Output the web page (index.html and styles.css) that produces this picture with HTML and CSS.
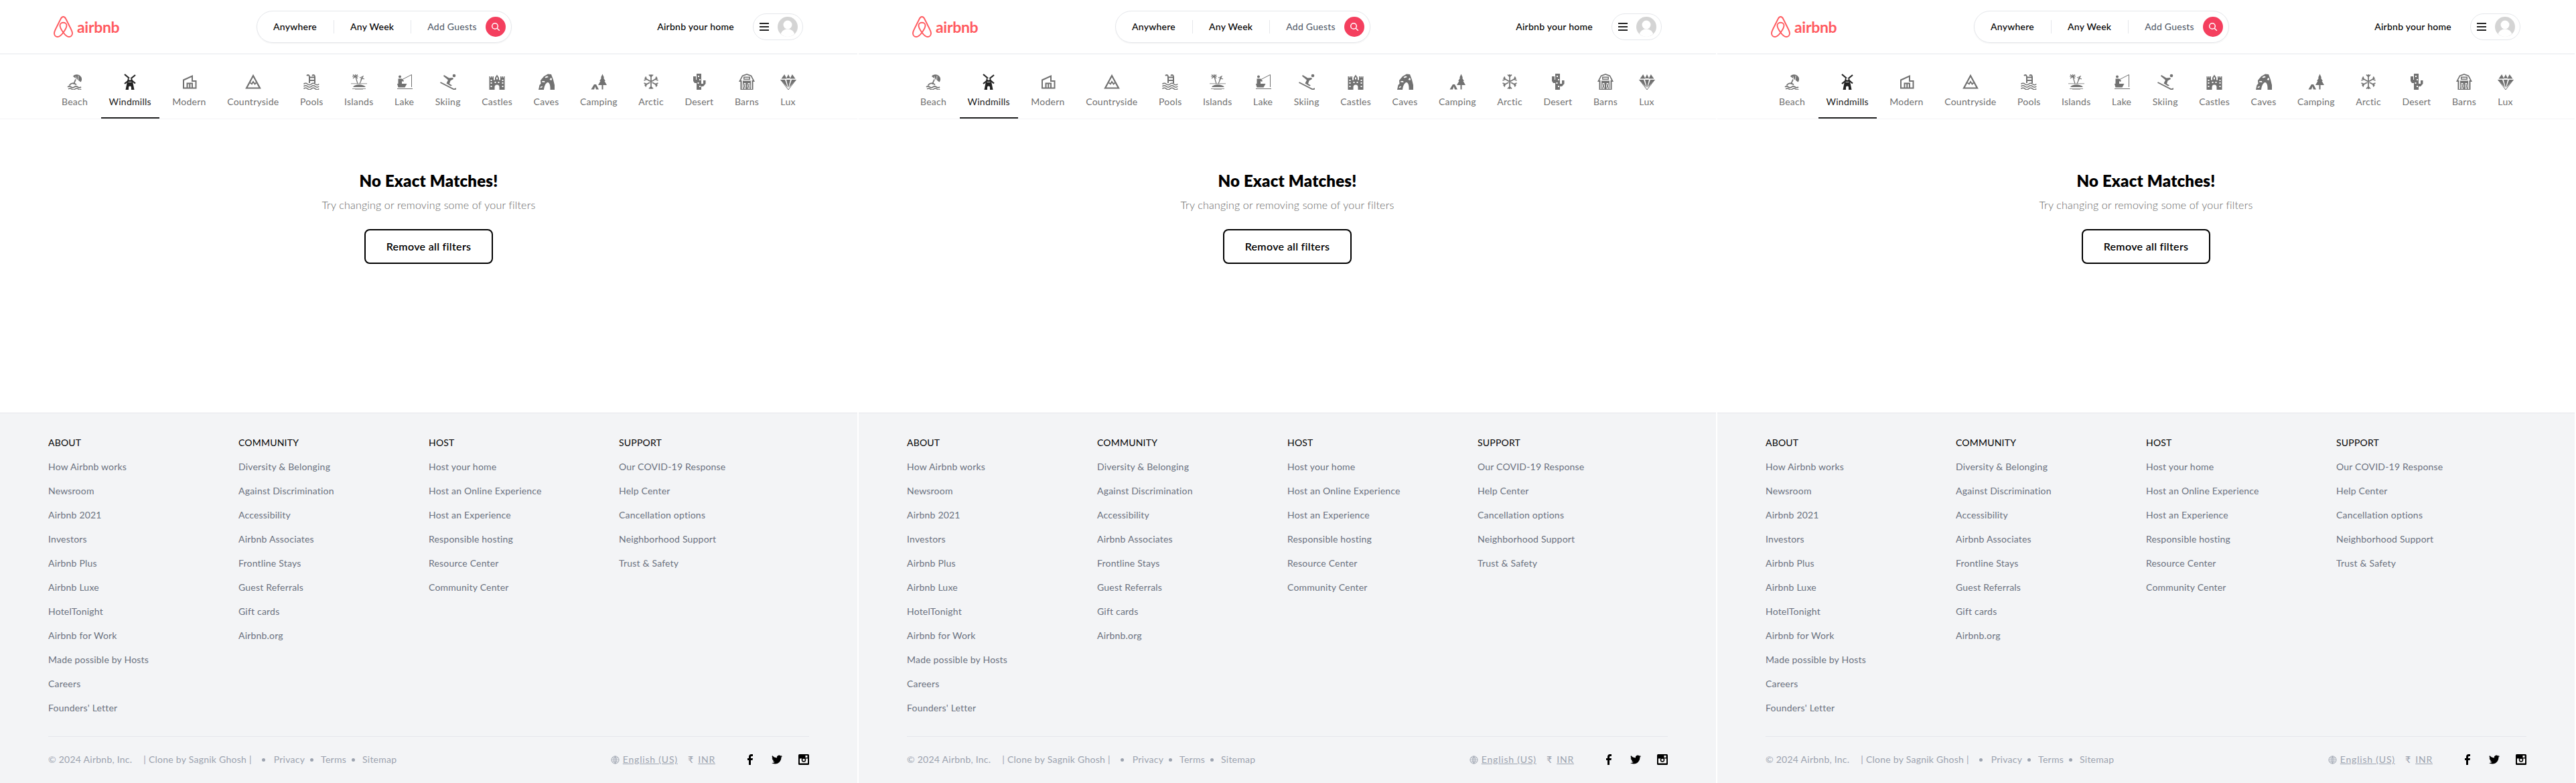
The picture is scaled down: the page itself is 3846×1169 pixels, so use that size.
FILE: index.html
```html
<!DOCTYPE html>
<html lang="en">
<head>
<meta charset="utf-8">
<title>Airbnb</title>
<link rel="stylesheet" href="styles.css">
</head>
<body>
<svg class="defs" xmlns="http://www.w3.org/2000/svg">
<symbol id="i-logo" viewBox="0 0 29 32"><path fill="none" stroke="currentColor" stroke-width="1.9" d="M14.5 24.5C17 28 20 31 23 31c3 0 5-2.5 5-5.2 0-1.8-1-4.3-2.5-7.3l-7-14C17.5 2.3 16 1 14.5 1s-3 1.300-4 3.500l-7 14C2 21.500 1 24 1 25.800 1 28.500 3 31 6 31c3 0 6-3 8.500-6.500 3-4 5-8 5-10.500s-2.200-4.200-5-4.200-5 1.700-5 4.200 2 6.500 5 10.500z"/></symbol>
<symbol id="i-beach" viewBox="0 0 24 24"><path d="M9 4C11 0 19 0 21.500 5.500 22.800 8.500 21.800 11 20.500 12.500z"/><path d="M13 4 14.500 9.500M17 3 16.500 10" stroke="#fff" stroke-width=".8" fill="none"/><path d="M13 8.500 10 15.500" fill="none" stroke="currentColor" stroke-width="1.800"/><path d="M3.500 17.500C6 14 10 13 14 16.500M1 19.800q2.500-2 5 0t5 0 5 0 5 0" fill="none" stroke="currentColor" stroke-width="1.700"/><path d="M2 23q2.500-2 5 0t5 0 5 0 4 0" fill="none" stroke="currentColor" stroke-width="1.500"/></symbol>
<symbol id="i-windmill" viewBox="0 0 24 24"><path d="M4 1 20 14.500M20 2 4 15" stroke="currentColor" stroke-width="2.200" fill="none"/><path d="M9 6.500h6L18.500 24h-4.500v-3.500a2 2 0 0 0-4 0V24H5.500z"/><circle cx="12" cy="8" r="1.800" fill="#fff"/><path d="M9.500 12.500H14.500" stroke="#fff" stroke-width=".8"/></symbol>
<symbol id="i-modern" viewBox="0 0 24 24"><path d="M3 21.500V9.500L16 3.500V11H21.500V21.500ZM8.500 21.500V14.500H16V21.500M12.300 14.500V21.500" fill="none" stroke="currentColor" stroke-width="2"/></symbol>
<symbol id="i-mountain" viewBox="0 0 24 24"><path d="M2 21.500 12 3l10 18.500z" fill="none" stroke="currentColor" stroke-width="2.200"/><path d="M7.500 13.500 10 15.500l2-3.500 2.500 3.500 2-2" fill="none" stroke="currentColor" stroke-width="1.800"/></symbol>
<symbol id="i-pool" viewBox="0 0 24 24"><path d="M5 3C7 1 9 2 9 5V14M13 3c2-2 4-1 4 2V14M9 5.500H17M9 10H17" fill="none" stroke="currentColor" stroke-width="2"/><path d="M0.500 15.500q2.800-2.500 5.700 0t5.700 0 5.700 0 5.700 0M0.500 19q2.800-2.500 5.700 0t5.700 0 5.700 0 5.700 0M0.500 22.500q2.800-2.500 5.700 0t5.700 0 5.700 0 5.700 0" fill="none" stroke="currentColor" stroke-width="1.600"/></symbol>
<symbol id="i-island" viewBox="0 0 24 24"><path d="M6.500 1 7.500 5M2 4h9M3 1.500 10 7M10 1.500 3 7M7 5 10 15M16 4l1 4M13 5.500 20 8M18.500 3 14.500 10M16.500 7 13 15" fill="none" stroke="currentColor" stroke-width="1.200"/><path d="M0 14.500h24v.8H0zM3 20c3-5 15-5 19 0z"/><path d="M2 22h20v.8H2zM6 23.500h12v.5H6z"/></symbol>
<symbol id="i-lake" viewBox="0 0 24 24"><circle cx="5" cy="4.500" r="2"/><path d="M2.500 7.500H8L11 10.500 10 12 8 11V16H2.500z"/><path d="M1 15H15.500L12.500 20.500H2.500z"/><path d="M8 9 22.500 1.500V20" fill="none" stroke="currentColor" stroke-width="1"/><path d="M1 22.500h23" stroke="currentColor" stroke-width="1"/></symbol>
<symbol id="i-ski" viewBox="0 0 24 24"><circle cx="21" cy="3" r="2.300"/><path d="M6 2 13.500 6.500 19 6 20 8 15.500 10.500 14 15 18 17.500 16 18.500 9.500 14.500 12 9.500 5 3.500z"/><path d="M0.500 13 21 23.500 25 22" fill="none" stroke="currentColor" stroke-width="1.900"/></symbol>
<symbol id="i-castle" viewBox="0 0 24 24"><path fill-rule="evenodd" d="M0.500 4H2V5.800H3V4H4.500V5.800H5.500V4H7V9.500H9V6L12 1.500 15 6V9.500H17V4H18.500V5.800H19.500V4H21V5.800H22V4H23.500V24H15.500V20A3.500 3.500 0 0 0 8.500 20V24H0.500ZM11 5.500V8.500H13V5.500ZM2.500 9V11H4.500V9ZM19.500 9V11H21.500V9ZM2.500 13V15H4.500V13ZM19.500 13V15H21.500V13ZM2.500 18V20H4.500V18ZM19.500 18V20H21.500V18ZM8.500 12V14H10.500V12ZM13.500 12V14H15.500V12Z"/></symbol>
<symbol id="i-cave" viewBox="0 0 24 24"><path fill-rule="evenodd" d="M0 24 1.500 17 3.500 15 3 10 8 4 14 0.500 19 1 22 9 24 17 24 24H17.500C18 17 16 12.500 13.500 13 10.500 14 8.500 19 8 24ZM13 3.500 9.500 5 10.500 6.500 15 5ZM18.500 6 16.500 9 19.500 10 20 7.500ZM5.500 11 5 12.500 9.500 13 9 11ZM2.500 20 3 21.500 6 20 5.500 18.500Z"/></symbol>
<symbol id="i-camp" viewBox="0 0 24 24"><path d="M17.500 0.500 20 6H19L21.800 11H20.500L24 17H18.500V23.500H16.500V17H11L14.500 11H13.200L16 6H15z"/><path d="M5 16H8L12 23.500H8L6.500 19 5 23.500H0.500z"/></symbol>
<symbol id="i-snow" viewBox="0 0 24 24"><path d="M12 1V23M2.500 6.500 21.500 17.500M21.500 6.500 2.500 17.500M9 1.500 12 4.500 15 1.500M9 22.500 12 19.500 15 22.500M1.500 10 5 8.500 4 4.500M22.500 10 19 8.500 20 4.500M1.500 14 5 15.500 4 19.500M22.500 14 19 15.500 20 19.500" fill="none" stroke="currentColor" stroke-width="1.700"/></symbol>
<symbol id="i-cactus" viewBox="0 0 24 24"><path fill-rule="evenodd" d="M8 0H15V24H8V14H5L3 11V4H7V9H8ZM15 15H18V10H21.500V15L18 19H15ZM10 3V5H12V3ZM12 8V10H14V8ZM9.500 13V15H11.500V13ZM12 18V20H14V18Z"/></symbol>
<symbol id="i-barn" viewBox="0 0 24 24"><path fill-rule="evenodd" d="M12 0 19 2.500 24 12H21.500V24H2.500V12H0L5 2.500ZM12 1.800 6 4 3 10H4.500V23H19.500V10H21L18 4Z"/><path fill-rule="evenodd" d="M7 4.500H17V9H7ZM8.500 6V7.500H15.500V6ZM6 10.500H18V24H6ZM7 14V22.500H11V14ZM13 14V22.500H17V14Z"/><path d="M7.500 14.500 10.500 22M10.500 14.500 7.500 22M13.500 14.500 16.500 22M16.500 14.500 13.500 22" stroke="currentColor" fill="none"/></symbol>
<symbol id="i-lux" viewBox="0 0 24 24"><path d="M6.200 1 9.500 7.500H1.500zM17.800 1 22.500 7.500H14.500zM12 1 15 7H9zM0 9H7L11 20.500zM24 9H17L13 20.500zM9 9H15L12 21z"/><path d="M12 24 0.500 9M12 24 23.500 9" stroke="currentColor" fill="none"/></symbol>
<symbol id="i-search" viewBox="0 0 14 14"><circle cx="6" cy="6" r="4.300" fill="none" stroke="currentColor" stroke-width="1.500"/><path d="M9.200 9.200 12.800 12.800" stroke="currentColor" stroke-width="1.500"/></symbol>
<symbol id="i-user" viewBox="0 0 30 30"><circle cx="15" cy="15" r="15" fill="#d4d4d4"/><circle cx="15" cy="12" r="6.500" fill="#fff"/><path d="M4.800 25.500C7 20 11 18.500 15 18.500s8 1.500 10.200 7A15 15 0 0 1 15 30 15 15 0 0 1 4.800 25.500z" fill="#fff"/></symbol>
<symbol id="i-globe" viewBox="0 0 14 14"><circle cx="7" cy="7" r="6" fill="none" stroke="currentColor"/><path d="M1 7H13M2 4H12M2 10H12M7 1V13M7 1C4 4 4 10 7 13M7 1C10 4 10 10 7 13" fill="none" stroke="currentColor" stroke-width=".8"/></symbol>
<symbol id="i-fb" viewBox="0 0 16 16"><path d="M6 16V9H4V6H6V4C6 1.500 7.500 0 9.500 0H12V3H10.500C9.500 3 9 3.500 9 4.500V6H12L11.500 9H9V16z"/></symbol>
<symbol id="i-tw" viewBox="0 0 24 24"><path d="M23.953 4.570a10 10 0 01-2.825.775 4.958 4.958 0 002.163-2.723c-.951.555-2.005.959-3.127 1.184a4.920 4.920 0 00-8.384 4.482C7.690 8.095 4.067 6.130 1.640 3.162a4.822 4.822 0 00-.666 2.475c0 1.710.870 3.213 2.188 4.096a4.904 4.904 0 01-2.228-.616v.060a4.923 4.923 0 003.946 4.827 4.996 4.996 0 01-2.212.085 4.936 4.936 0 004.604 3.417 9.867 9.867 0 01-6.102 2.105c-.390 0-.779-.023-1.170-.067a13.995 13.995 0 007.557 2.209c9.053 0 13.998-7.496 13.998-13.985 0-.210 0-.420-.015-.630A9.935 9.935 0 0024 4.590z"/></symbol>
<symbol id="i-ig" viewBox="0 0 16 16"><rect width="16" height="16" rx="1.500"/><path d="M2 6.500H14V13.500H2z" fill="#fff"/><circle cx="8" cy="8.500" r="3.300" fill="#000"/><circle cx="8" cy="8.500" r="1.700" fill="#fff"/><rect x="10.500" y="2" width="3" height="3" fill="#fff"/></symbol>
</svg>

<div class="panels">
<section class="panel">
<header class="top">
<a class="logo"><svg class="belo"><use href="#i-logo"/></svg><span class="wordmark">airbnb</span></a>
<div class="search"><span class="search-item">Anywhere</span><span class="search-item">Any Week</span><span class="search-guests">Add Guests</span><span class="search-btn"><svg class="search-ico"><use href="#i-search"/></svg></span></div>
<div class="account"><span class="host">Airbnb your home</span><div class="menu"><span class="burger"><i></i><i></i><i></i></span><svg class="avatar"><use href="#i-user"/></svg></div></div>
</header>
<nav class="cats">
<a class="cat"><svg class="cat-ico"><use href="#i-beach"/></svg>Beach</a>
<a class="cat active"><svg class="cat-ico"><use href="#i-windmill"/></svg>Windmills</a>
<a class="cat"><svg class="cat-ico"><use href="#i-modern"/></svg>Modern</a>
<a class="cat"><svg class="cat-ico"><use href="#i-mountain"/></svg>Countryside</a>
<a class="cat"><svg class="cat-ico"><use href="#i-pool"/></svg>Pools</a>
<a class="cat"><svg class="cat-ico"><use href="#i-island"/></svg>Islands</a>
<a class="cat"><svg class="cat-ico"><use href="#i-lake"/></svg>Lake</a>
<a class="cat"><svg class="cat-ico"><use href="#i-ski"/></svg>Skiing</a>
<a class="cat"><svg class="cat-ico"><use href="#i-castle"/></svg>Castles</a>
<a class="cat"><svg class="cat-ico"><use href="#i-cave"/></svg>Caves</a>
<a class="cat"><svg class="cat-ico"><use href="#i-camp"/></svg>Camping</a>
<a class="cat"><svg class="cat-ico"><use href="#i-snow"/></svg>Arctic</a>
<a class="cat"><svg class="cat-ico"><use href="#i-cactus"/></svg>Desert</a>
<a class="cat"><svg class="cat-ico"><use href="#i-barn"/></svg>Barns</a>
<a class="cat"><svg class="cat-ico"><use href="#i-lux"/></svg>Lux</a>
</nav>
<main class="empty"><h1>No Exact Matches!</h1><p>Try changing or removing some of your filters</p><button class="clear">Remove all filters</button></main>
<footer class="foot">
<div class="foot-cols">
<div class="foot-col"><h2>ABOUT</h2><a>How Airbnb works</a><a>Newsroom</a><a>Airbnb 2021</a><a>Investors</a><a>Airbnb Plus</a><a>Airbnb Luxe</a><a>HotelTonight</a><a>Airbnb for Work</a><a>Made possible by Hosts</a><a>Careers</a><a>Founders' Letter</a></div>
<div class="foot-col"><h2>COMMUNITY</h2><a>Diversity &amp; Belonging</a><a>Against Discrimination</a><a>Accessibility</a><a>Airbnb Associates</a><a>Frontline Stays</a><a>Guest Referrals</a><a>Gift cards</a><a>Airbnb.org</a></div>
<div class="foot-col"><h2>HOST</h2><a>Host your home</a><a>Host an Online Experience</a><a>Host an Experience</a><a>Responsible hosting</a><a>Resource Center</a><a>Community Center</a></div>
<div class="foot-col"><h2>SUPPORT</h2><a>Our COVID-19 Response</a><a>Help Center</a><a>Cancellation options</a><a>Neighborhood Support</a><a>Trust &amp; Safety</a></div>
</div>
<div class="legal">
<span>© 2024 Airbnb, Inc.</span><span class="clone">| Clone by Sagnik Ghosh |</span><span class="dot"></span><a>Privacy</a><span class="dot"></span><a>Terms</a><span class="dot"></span><a>Sitemap</a>
<div class="legal-right"><svg class="globe"><use href="#i-globe"/></svg><a class="u">English (US)</a><span class="rupee">₹</span><a class="u">INR</a><span class="socials"><svg class="soc"><use href="#i-fb"/></svg><svg class="soc"><use href="#i-tw"/></svg><svg class="soc"><use href="#i-ig"/></svg></span></div>
</div>
</footer>
</section>

<section class="panel">
<header class="top">
<a class="logo"><svg class="belo"><use href="#i-logo"/></svg><span class="wordmark">airbnb</span></a>
<div class="search"><span class="search-item">Anywhere</span><span class="search-item">Any Week</span><span class="search-guests">Add Guests</span><span class="search-btn"><svg class="search-ico"><use href="#i-search"/></svg></span></div>
<div class="account"><span class="host">Airbnb your home</span><div class="menu"><span class="burger"><i></i><i></i><i></i></span><svg class="avatar"><use href="#i-user"/></svg></div></div>
</header>
<nav class="cats">
<a class="cat"><svg class="cat-ico"><use href="#i-beach"/></svg>Beach</a>
<a class="cat active"><svg class="cat-ico"><use href="#i-windmill"/></svg>Windmills</a>
<a class="cat"><svg class="cat-ico"><use href="#i-modern"/></svg>Modern</a>
<a class="cat"><svg class="cat-ico"><use href="#i-mountain"/></svg>Countryside</a>
<a class="cat"><svg class="cat-ico"><use href="#i-pool"/></svg>Pools</a>
<a class="cat"><svg class="cat-ico"><use href="#i-island"/></svg>Islands</a>
<a class="cat"><svg class="cat-ico"><use href="#i-lake"/></svg>Lake</a>
<a class="cat"><svg class="cat-ico"><use href="#i-ski"/></svg>Skiing</a>
<a class="cat"><svg class="cat-ico"><use href="#i-castle"/></svg>Castles</a>
<a class="cat"><svg class="cat-ico"><use href="#i-cave"/></svg>Caves</a>
<a class="cat"><svg class="cat-ico"><use href="#i-camp"/></svg>Camping</a>
<a class="cat"><svg class="cat-ico"><use href="#i-snow"/></svg>Arctic</a>
<a class="cat"><svg class="cat-ico"><use href="#i-cactus"/></svg>Desert</a>
<a class="cat"><svg class="cat-ico"><use href="#i-barn"/></svg>Barns</a>
<a class="cat"><svg class="cat-ico"><use href="#i-lux"/></svg>Lux</a>
</nav>
<main class="empty"><h1>No Exact Matches!</h1><p>Try changing or removing some of your filters</p><button class="clear">Remove all filters</button></main>
<footer class="foot">
<div class="foot-cols">
<div class="foot-col"><h2>ABOUT</h2><a>How Airbnb works</a><a>Newsroom</a><a>Airbnb 2021</a><a>Investors</a><a>Airbnb Plus</a><a>Airbnb Luxe</a><a>HotelTonight</a><a>Airbnb for Work</a><a>Made possible by Hosts</a><a>Careers</a><a>Founders' Letter</a></div>
<div class="foot-col"><h2>COMMUNITY</h2><a>Diversity &amp; Belonging</a><a>Against Discrimination</a><a>Accessibility</a><a>Airbnb Associates</a><a>Frontline Stays</a><a>Guest Referrals</a><a>Gift cards</a><a>Airbnb.org</a></div>
<div class="foot-col"><h2>HOST</h2><a>Host your home</a><a>Host an Online Experience</a><a>Host an Experience</a><a>Responsible hosting</a><a>Resource Center</a><a>Community Center</a></div>
<div class="foot-col"><h2>SUPPORT</h2><a>Our COVID-19 Response</a><a>Help Center</a><a>Cancellation options</a><a>Neighborhood Support</a><a>Trust &amp; Safety</a></div>
</div>
<div class="legal">
<span>© 2024 Airbnb, Inc.</span><span class="clone">| Clone by Sagnik Ghosh |</span><span class="dot"></span><a>Privacy</a><span class="dot"></span><a>Terms</a><span class="dot"></span><a>Sitemap</a>
<div class="legal-right"><svg class="globe"><use href="#i-globe"/></svg><a class="u">English (US)</a><span class="rupee">₹</span><a class="u">INR</a><span class="socials"><svg class="soc"><use href="#i-fb"/></svg><svg class="soc"><use href="#i-tw"/></svg><svg class="soc"><use href="#i-ig"/></svg></span></div>
</div>
</footer>
</section>

<section class="panel">
<header class="top">
<a class="logo"><svg class="belo"><use href="#i-logo"/></svg><span class="wordmark">airbnb</span></a>
<div class="search"><span class="search-item">Anywhere</span><span class="search-item">Any Week</span><span class="search-guests">Add Guests</span><span class="search-btn"><svg class="search-ico"><use href="#i-search"/></svg></span></div>
<div class="account"><span class="host">Airbnb your home</span><div class="menu"><span class="burger"><i></i><i></i><i></i></span><svg class="avatar"><use href="#i-user"/></svg></div></div>
</header>
<nav class="cats">
<a class="cat"><svg class="cat-ico"><use href="#i-beach"/></svg>Beach</a>
<a class="cat active"><svg class="cat-ico"><use href="#i-windmill"/></svg>Windmills</a>
<a class="cat"><svg class="cat-ico"><use href="#i-modern"/></svg>Modern</a>
<a class="cat"><svg class="cat-ico"><use href="#i-mountain"/></svg>Countryside</a>
<a class="cat"><svg class="cat-ico"><use href="#i-pool"/></svg>Pools</a>
<a class="cat"><svg class="cat-ico"><use href="#i-island"/></svg>Islands</a>
<a class="cat"><svg class="cat-ico"><use href="#i-lake"/></svg>Lake</a>
<a class="cat"><svg class="cat-ico"><use href="#i-ski"/></svg>Skiing</a>
<a class="cat"><svg class="cat-ico"><use href="#i-castle"/></svg>Castles</a>
<a class="cat"><svg class="cat-ico"><use href="#i-cave"/></svg>Caves</a>
<a class="cat"><svg class="cat-ico"><use href="#i-camp"/></svg>Camping</a>
<a class="cat"><svg class="cat-ico"><use href="#i-snow"/></svg>Arctic</a>
<a class="cat"><svg class="cat-ico"><use href="#i-cactus"/></svg>Desert</a>
<a class="cat"><svg class="cat-ico"><use href="#i-barn"/></svg>Barns</a>
<a class="cat"><svg class="cat-ico"><use href="#i-lux"/></svg>Lux</a>
</nav>
<main class="empty"><h1>No Exact Matches!</h1><p>Try changing or removing some of your filters</p><button class="clear">Remove all filters</button></main>
<footer class="foot">
<div class="foot-cols">
<div class="foot-col"><h2>ABOUT</h2><a>How Airbnb works</a><a>Newsroom</a><a>Airbnb 2021</a><a>Investors</a><a>Airbnb Plus</a><a>Airbnb Luxe</a><a>HotelTonight</a><a>Airbnb for Work</a><a>Made possible by Hosts</a><a>Careers</a><a>Founders' Letter</a></div>
<div class="foot-col"><h2>COMMUNITY</h2><a>Diversity &amp; Belonging</a><a>Against Discrimination</a><a>Accessibility</a><a>Airbnb Associates</a><a>Frontline Stays</a><a>Guest Referrals</a><a>Gift cards</a><a>Airbnb.org</a></div>
<div class="foot-col"><h2>HOST</h2><a>Host your home</a><a>Host an Online Experience</a><a>Host an Experience</a><a>Responsible hosting</a><a>Resource Center</a><a>Community Center</a></div>
<div class="foot-col"><h2>SUPPORT</h2><a>Our COVID-19 Response</a><a>Help Center</a><a>Cancellation options</a><a>Neighborhood Support</a><a>Trust &amp; Safety</a></div>
</div>
<div class="legal">
<span>© 2024 Airbnb, Inc.</span><span class="clone">| Clone by Sagnik Ghosh |</span><span class="dot"></span><a>Privacy</a><span class="dot"></span><a>Terms</a><span class="dot"></span><a>Sitemap</a>
<div class="legal-right"><svg class="globe"><use href="#i-globe"/></svg><a class="u">English (US)</a><span class="rupee">₹</span><a class="u">INR</a><span class="socials"><svg class="soc"><use href="#i-fb"/></svg><svg class="soc"><use href="#i-tw"/></svg><svg class="soc"><use href="#i-ig"/></svg></span></div>
</div>
</footer>
</section>
</div>
</body>
</html>
```
FILE: styles.css
```css
* { box-sizing: border-box; }
html, body { margin: 0; padding: 0; background: #fff; }
body { font-family: "Lato", "Liberation Sans", sans-serif; font-size: 14px; line-height: 20px; color: #000; overflow: hidden; letter-spacing: .25px; }
.defs { display: none; }
.panels { display: flex; gap: 2px; height: 1169px; }
.panel { width: 1280px; flex: none; display: flex; flex-direction: column; }

.top { height: 81px; flex: none; display: flex; align-items: center; padding: 0 81px 0 80px; border-bottom: 1px solid #e5e7eb; }
.logo { width: 100px; display: flex; align-items: center; gap: 6px; color: #ff5a5f; }
.belo { width: 29px; height: 32px; flex: none; }
.wordmark { font-size: 23px; font-weight: 700; line-height: 32px; letter-spacing: -.3px; }
.search { margin-left: 203px; height: 48px; display: flex; align-items: center; padding-right: 8px; border: 1px solid #e5e7eb; border-radius: 24px; box-shadow: 0 1px 2px rgba(0,0,0,.06); }
.search-item { padding: 0 25px 0 24px; border-right: 1px solid #e5e7eb; font-weight: 500; }
.search-guests { padding: 0 13px 0 24px; color: #4b5563; }
.search-btn { width: 30px; height: 30px; border-radius: 50%; background: #f43f5e; color: #fff; display: flex; align-items: center; justify-content: center; }
.search-ico { width: 14px; height: 14px; }
.account { margin-left: auto; display: flex; align-items: center; gap: 28px; }
.host { font-weight: 500; }
.menu { width: 75px; height: 40px; border: 1px solid #e5e7eb; border-radius: 20px; display: flex; align-items: center; padding: 0 7px 0 9px; justify-content: space-between; }
.burger { width: 14px; display: flex; flex-direction: column; gap: 3.800px; }
.burger i { display: block; height: 1.200px; background: #222; }
.avatar { width: 30px; height: 30px; }

.cats { height: 97px; flex: none; display: flex; gap: 7.500px; padding-left: 80px; border-bottom: 1px solid #f3f4f6; }
.cat { height: 96px; padding: 29px 12px 0; display: flex; flex-direction: column; align-items: center; gap: 8px; color: #717171; border-bottom: 2px solid transparent; }
.cat.active { color: #222; border-bottom-color: #222; }
.cat-ico { width: 24px; height: 24px; fill: currentColor; flex: none; }

.empty { flex: 1; display: flex; flex-direction: column; align-items: center; padding-top: 76px; }
.empty h1 { margin: 0; font-size: 24px; line-height: 32px; font-weight: 800; letter-spacing: .2px; }
.empty p { margin: 8px 0 0; font-size: 16px; line-height: 24px; color: #666; font-weight: 300; letter-spacing: .18px; }
.clear { margin-top: 24px; width: 192px; height: 52px; background: #fff; border: 2px solid #000; border-radius: 8px; font: 600 16px/24px "Lato", sans-serif; color: #000; letter-spacing: .3px; }

.foot { flex: none; height: 553px; background: #f3f4f6; border-top: 1px solid #e5e7eb; padding: 34px 72px 0; display: flex; flex-direction: column; }
.foot-cols { height: 449px; display: grid; grid-template-columns: repeat(4, 284px); border-bottom: 1px solid #e5e7eb; }
.foot-col { display: flex; flex-direction: column; gap: 16px; color: #6b7280; letter-spacing: .2px; }
.foot-col h2 { margin: 0; font-size: 14px; line-height: 20px; font-weight: 400; color: #000; letter-spacing: .2px; }
.legal { margin-top: 24px; display: flex; align-items: center; color: #9ca3af; }
.clone { margin-left: 17px; }
.dot { width: 5px; height: 5px; border-radius: 50%; background: #9ca3af; margin: 0 11px 0 8px; }
.clone + .dot { margin: 0 13px 0 15px; }
.legal-right { margin-left: auto; display: flex; align-items: center; }
.globe { width: 13px; height: 13px; margin-right: 5px; }
.u { text-decoration: underline; letter-spacing: .8px; }
.rupee { margin: 0 7px 0 15px; }
.socials { display: flex; gap: 24px; margin-left: 44px; color: #000; }
.soc { width: 16px; height: 16px; fill: currentColor; }
```
